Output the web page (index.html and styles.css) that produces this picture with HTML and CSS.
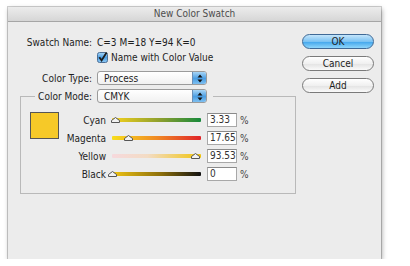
FILE: index.html
```html
<!DOCTYPE html>
<html lang="en">
<head>
    <meta charset="UTF-8" />
    <title>New Color Swatch</title>
    <link rel="stylesheet" href="styles.css">
</head>
<body>
    <!-- Dialog window -->
    <div class="window">
        <div class="titlebar">New Color Swatch</div>

        <div class="dialog">
            <!-- Left column: the form -->
            <div class="form">
                <div class="row">
                    <span class="label">Swatch Name:</span>
                    <span class="value">C=3 M=18 Y=94 K=0</span>
                </div>

                <div class="row row-check">
                    <span class="label"></span>
                    <label class="check">
                        <svg class="checkbox" width="11" height="11" viewBox="0 0 11 11">
                            <defs>
                                <linearGradient id="cb" x1="0" y1="0" x2="0" y2="1">
                                    <stop offset="0" stop-color="#a9d6f7"/>
                                    <stop offset="0.5" stop-color="#4d9fe4"/>
                                    <stop offset="1" stop-color="#8fcaf4"/>
                                </linearGradient>
                            </defs>
                            <rect x="0.5" y="0.5" width="10" height="10" rx="2" fill="url(#cb)" stroke="#4d6f96"/>
                            <path d="M2.3 5.2 L4.6 8.4 L9.6 0.6" fill="none" stroke="#1b1b1b" stroke-width="1.8"/>
                        </svg>
                        Name with Color Value
                    </label>
                </div>

                <div class="row row-type">
                    <span class="label">Color Type:</span>
                    <div class="select">
                        <span class="select-text">Process</span>
                        <span class="stepper">
                            <svg width="6" height="9" viewBox="0 0 6 9">
                                <path d="M3 0.5 L5.5 3.5 L0.5 3.5 Z M3 8.5 L5.5 5.5 L0.5 5.5 Z" fill="#111"/>
                            </svg>
                        </span>
                    </div>
                </div>

                <!-- Color mode group box -->
                <div class="group">
                    <div class="group-head">
                        <div class="group-label"><span>Color Mode:</span></div>
                        <div class="group-select">
                            <div class="select">
                                <span class="select-text">CMYK</span>
                                <span class="stepper">
                                    <svg width="6" height="9" viewBox="0 0 6 9">
                                        <path d="M3 0.5 L5.5 3.5 L0.5 3.5 Z M3 8.5 L5.5 5.5 L0.5 5.5 Z" fill="#111"/>
                                    </svg>
                                </span>
                            </div>
                        </div>
                    </div>

                    <div class="group-body">
                        <div class="swatch"></div>

                        <div class="sliders">
                            <div class="slider-row">
                                <span class="slider-label">Cyan</span>
                                <div class="track cyan">
                                    <svg class="thumb" style="left: 3.33%" width="9" height="6" viewBox="0 0 9 6"><path d="M4.5 0.5 L8.5 3.5 L8.5 5.5 L0.5 5.5 L0.5 3.5 Z" fill="#f2f2f2" stroke="#555"/></svg>
                                </div>
                                <span class="num">3.33</span>
                                <span class="pct">%</span>
                            </div>
                            <div class="slider-row">
                                <span class="slider-label">Magenta</span>
                                <div class="track magenta">
                                    <svg class="thumb" style="left: 17.65%" width="9" height="6" viewBox="0 0 9 6"><path d="M4.5 0.5 L8.5 3.5 L8.5 5.5 L0.5 5.5 L0.5 3.5 Z" fill="#f2f2f2" stroke="#555"/></svg>
                                </div>
                                <span class="num">17.65</span>
                                <span class="pct">%</span>
                            </div>
                            <div class="slider-row">
                                <span class="slider-label">Yellow</span>
                                <div class="track yellow">
                                    <svg class="thumb" style="left: 93.53%" width="9" height="6" viewBox="0 0 9 6"><path d="M4.5 0.5 L8.5 3.5 L8.5 5.5 L0.5 5.5 L0.5 3.5 Z" fill="#f2f2f2" stroke="#555"/></svg>
                                </div>
                                <span class="num">93.53</span>
                                <span class="pct">%</span>
                            </div>
                            <div class="slider-row">
                                <span class="slider-label">Black</span>
                                <div class="track black">
                                    <svg class="thumb" style="left: 0%" width="9" height="6" viewBox="0 0 9 6"><path d="M4.5 0.5 L8.5 3.5 L8.5 5.5 L0.5 5.5 L0.5 3.5 Z" fill="#f2f2f2" stroke="#555"/></svg>
                                </div>
                                <span class="num">0</span>
                                <span class="pct">%</span>
                            </div>
                        </div>
                    </div>
                </div>
            </div>

            <!-- Right column: buttons -->
            <div class="buttons">
                <button type="button" class="btn btn-default">OK</button>
                <button type="button" class="btn">Cancel</button>
                <button type="button" class="btn">Add</button>
            </div>
        </div>
    </div>
</body>
</html>
```

FILE: styles.css
```css
* {
    box-sizing: border-box;
    margin: 0;
    padding: 0;
}

body {
    background: #fff;
    font-family: "DejaVu Sans Condensed", "Liberation Sans", sans-serif;
    font-size: 10px;
    color: #1e1e1e;
    padding: 7px 0 0 8px;
}

/* Window frame */
.window {
    width: 373px;
    height: 252px;
    background: #ececec;
    box-shadow: 0 0 0 1px rgba(0, 0, 0, 0.18), 1px 2px 5px rgba(0, 0, 0, 0.35);
    display: flex;
    flex-direction: column;
}

.titlebar {
    height: 15px;
    line-height: 14px;
    text-align: center;
    color: #4d4d4d;
    background: linear-gradient(#ececec, #d6d6d6);
    border-bottom: 1px solid #a6a6a6;
}

.dialog {
    flex: 1;
    display: flex;
}

/* Form column */
.form {
    width: 294px;
    padding-top: 13px;
}

.row {
    display: flex;
    align-items: center;
    height: 14px;
    gap: 5px;
}

.row-check {
    margin-top: 1px;
}

.row-type {
    margin-top: 7px;
}

.label {
    width: 84px;
    text-align: right;
    flex-shrink: 0;
}

.check {
    display: flex;
    align-items: center;
    gap: 3px;
}

.checkbox {
    display: block;
}

/* Popup menus */
.select {
    width: 110px;
    height: 14px;
    display: flex;
    align-items: center;
    background: linear-gradient(#ffffff, #f1f1f1);
    border: 1px solid #9b9b9b;
    border-radius: 3px;
    overflow: hidden;
}

.select-text {
    flex: 1;
    padding-left: 6px;
}

.stepper {
    width: 14px;
    height: 100%;
    display: flex;
    align-items: center;
    justify-content: center;
    background: linear-gradient(#a7d5f6, #4a9de2 55%, #7fc0f1);
    border-left: 1px solid #6b8fb7;
}

/* Group box */
.group {
    margin: 11px 0 0 12px;
    width: 276px;
    border: 1px solid #b9b9b9;
    padding-bottom: 10px;
}

.group-head {
    display: flex;
    height: 14px;
    margin-top: -8px;
}

.group-label {
    width: 71px;
    display: flex;
    justify-content: flex-end;
    align-items: center;
    white-space: nowrap;
}

.group-label span {
    background: #ececec;
    padding-left: 3px;
}

.group-select {
    background: #ececec;
    padding: 0 6px 0 5px;
}

.group-body {
    display: flex;
    margin-top: 8px;
    padding-left: 9px;
}

.swatch {
    width: 29px;
    height: 27px;
    margin-top: 1px;
    background: #f6c928;
    border: 1px solid #555;
}

.slider-row {
    display: flex;
    align-items: center;
    height: 18px;
}

.slider-label {
    width: 47px;
    text-align: right;
}

.track {
    position: relative;
    width: 89px;
    height: 4px;
    margin: 0 6px;
    border-radius: 1px;
}

.track.cyan {
    background: linear-gradient(to right, #f7d21c, #8a9e2e 55%, #17893c);
}

.track.magenta {
    background: linear-gradient(to right, #f7de1c, #f08a24 50%, #e0242a);
}

.track.yellow {
    background: linear-gradient(to right, #f6d9dd, #f3dcc4 40%, #f0c40e);
}

.track.black {
    background: linear-gradient(to right, #f0c414, #8c6e0a 55%, #111);
}

/* Thumb sits over the track */
.thumb {
    position: absolute;
    top: -1px;
    margin-left: -4px;
}

.num {
    width: 30px;
    height: 14px;
    line-height: 12px;
    padding-left: 2px;
    background: #fff;
    border: 1px solid #a8a8a8;
    border-top-color: #8a8a8a;
    color: #333;
}

.pct {
    margin-left: 3px;
    color: #444;
}

/* Buttons column */
.buttons {
    display: flex;
    flex-direction: column;
    gap: 7px;
    padding-top: 12px;
}

.btn {
    width: 72px;
    height: 15px;
    font-family: inherit;
    font-size: 10px;
    color: #1e1e1e;
    border: 1px solid #7a7a7a;
    border-radius: 8px;
    background: linear-gradient(#ffffff, #f0f0f0 50%, #e2e2e2 51%, #fafafa);
}

.btn-default {
    border-color: #3f6996;
    background: linear-gradient(#c4e5fb, #7cc3f3 50%, #3fa4ec 51%, #8fd6fb);
}
```
